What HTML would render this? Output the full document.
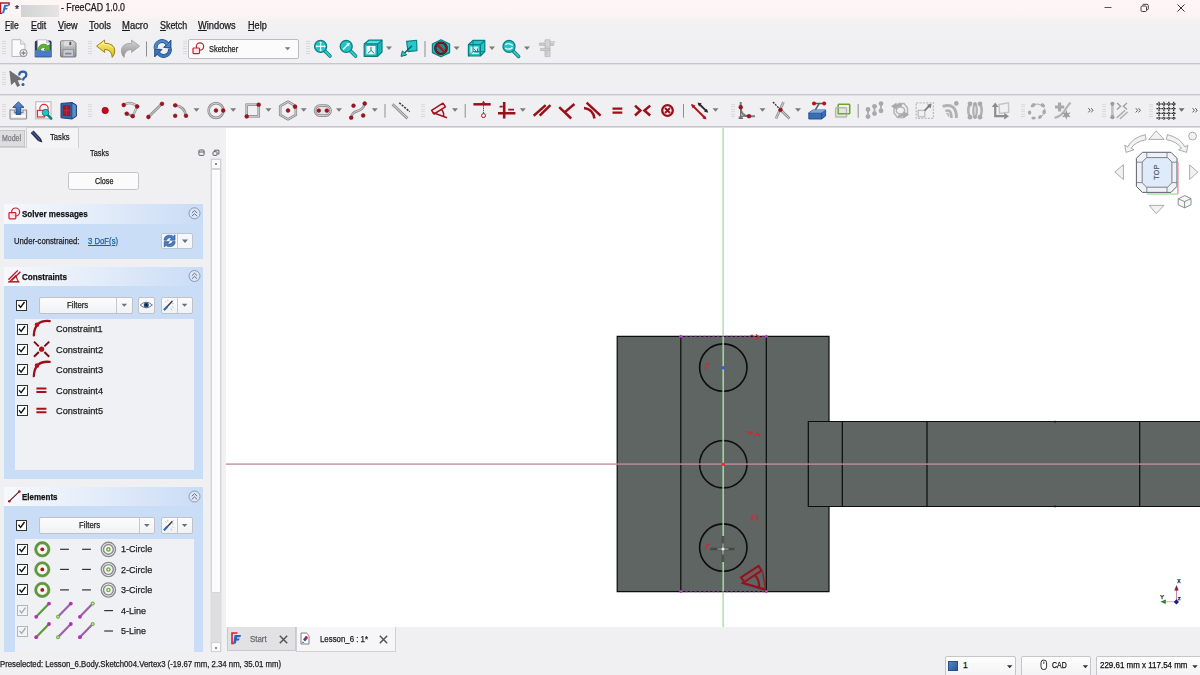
<!DOCTYPE html>
<html lang="en">
<head>
<meta charset="utf-8">
<title>FreeCAD 1.0.0</title>
<style>
*{box-sizing:border-box;margin:0;padding:0}
html,body{width:1200px;height:675px;overflow:hidden;background:#f0f0f2}
body{position:relative;font-family:"Liberation Sans",sans-serif;font-size:9px;color:#1a1a1a;-webkit-font-smoothing:antialiased}
.abs{position:absolute}
.t{position:absolute;white-space:nowrap;line-height:1;transform-origin:0 50%;-webkit-text-stroke:.25px currentColor}
.hl{position:absolute;height:1px;background:#c9c9cc}
.vl{position:absolute;width:1px;background:#9a9a9a}
svg{position:absolute;overflow:visible}
.grip{position:absolute;width:4px;height:15px;background-image:radial-gradient(circle,#bdbdc2 0.55px,transparent 0.9px);background-size:2px 2.5px;opacity:.6}
.arr{position:absolute;width:0;height:0;border-left:3px solid transparent;border-right:3px solid transparent;border-top:3.5px solid #777}
.chev{position:absolute;font-size:8px;color:#555;line-height:1}
u{text-decoration:underline;text-underline-offset:1px}
.btn{position:absolute;background:linear-gradient(#fdfdfd,#f1f1f3);border:1px solid #c2c2c6;border-radius:2px}
.cb{position:absolute;width:11px;height:11px;background:#fff;border:1px solid #333}
.cb.dis{border-color:#b5b5b8;background:#f4f4f6}
</style>
</head>
<body>
<!-- title bar -->
<div class="abs" style="left:0;top:0;width:1200px;height:36px;background:linear-gradient(#fdf5f6 0,#fcf4f5 15px,#f3f1f3 22px,#f0f0f2 36px)"></div>
<svg style="left:0;top:0" width="12" height="16" viewBox="0 0 12 16">
  <rect x=".6" y="2.900" width="8.400" height="10.300" fill="#fff"/>
  <path d="M9 5.400 V2.900 H.5 V13.200 H2.200" fill="none" stroke="#b81c28" stroke-width="1.500"/>
  <path d="M4.200 4.800 H8.900 L8.300 6.600 H6 L5.600 7.900 H7.700 L7.100 9.600 H5.100 L4.100 13.200 H2 Z" fill="#2f72cc"/>
</svg>
<div class="t" style="left:15px;top:5px;font-size:10px;color:#222">*</div>
<div class="abs" style="left:21px;top:5px;width:38px;height:12px;background:linear-gradient(90deg,#d2d2d2,#dcdcdc 50%,#e6e4e5);filter:blur(.6px)"></div>
<div class="t" id="ttl" style="left:61px;top:2.700px;font-size:10px;color:#1a1a1a;transform:scaleX(0.8790)">- FreeCAD 1.0.0</div>
<!-- window controls -->
<svg style="left:1100px;top:0" width="100" height="16" viewBox="0 0 100 16">
  <path d="M4.5 7.5 H11.5" stroke="#555" stroke-width="1" fill="none"/>
  <rect x="41" y="6" width="5.5" height="5.5" rx="1.2" fill="none" stroke="#444" stroke-width="1"/>
  <path d="M42.8 5.8 V5.2 Q42.8 4.3 43.8 4.3 H47 Q48.3 4.3 48.3 5.6 V8.8 Q48.3 9.7 47.3 9.7 H46.8" fill="none" stroke="#444" stroke-width="1"/>
  <path d="M77.5 4.5 L84.5 11.5 M84.5 4.5 L77.5 11.5" stroke="#333" stroke-width="1" fill="none"/>
</svg>
<!-- menu bar -->
<div class="t m" style="left:5px;top:20.600px;font-size:10px;transform:scaleX(0.8527)"><u>F</u>ile</div>
<div class="t m" style="left:30.5px;top:20.600px;font-size:10px;transform:scaleX(0.8849)"><u>E</u>dit</div>
<div class="t m" style="left:57.5px;top:20.600px;font-size:10px;transform:scaleX(0.9063)"><u>V</u>iew</div>
<div class="t m" style="left:88.75px;top:20.600px;font-size:10px;transform:scaleX(0.9418)"><u>T</u>ools</div>
<div class="t m" style="left:121.75px;top:20.600px;font-size:10px;transform:scaleX(0.9444)"><u>M</u>acro</div>
<div class="t m" style="left:159.5px;top:20.600px;font-size:10px;transform:scaleX(0.8912)"><u>S</u>ketch</div>
<div class="t m" style="left:198px;top:20.600px;font-size:10px;transform:scaleX(0.9299)"><u>W</u>indows</div>
<div class="t m" style="left:247.5px;top:20.600px;font-size:10px;transform:scaleX(0.9105)"><u>H</u>elp</div>
<!-- toolbar separators -->
<div class="hl" style="left:0;top:63px;width:1200px;background:#c6c6ca"></div>
<div class="hl" style="left:0;top:64px;width:1200px;background:#e2e2e5"></div>
<div class="hl" style="left:0;top:94px;width:1200px;background:#c6c6ca"></div>
<div class="hl" style="left:0;top:95px;width:1200px;background:#e2e2e5"></div>
<div class="hl" style="left:0;top:126px;width:1200px;background:#c6c6ca"></div>
<div class="hl" style="left:0;top:127px;width:1200px;background:#dcdcdf"></div>
<!-- toolbar 1 -->
<div class="grip" style="left:2px;top:40px"></div>
<div class="grip" style="left:88px;top:40px"></div>
<div class="grip" style="left:183px;top:40px"></div>
<div class="grip" style="left:306px;top:40px"></div>
<svg style="left:0;top:0" width="1200" height="130" viewBox="0 0 1200 130">
<defs>
  <linearGradient id="gTeal" x1="0" y1="0" x2="1" y2="1"><stop offset="0" stop-color="#34e0e2"/><stop offset="1" stop-color="#16b0b4"/></linearGradient>
  <linearGradient id="gBlue" x1="0" y1="0" x2="0" y2="1"><stop offset="0" stop-color="#5d8fd0"/><stop offset="1" stop-color="#2f62a8"/></linearGradient>
  <linearGradient id="gYel" x1="0" y1="0" x2="0" y2="1"><stop offset="0" stop-color="#fdf17a"/><stop offset="1" stop-color="#d9b81c"/></linearGradient>
  <linearGradient id="gGray" x1="0" y1="0" x2="0" y2="1"><stop offset="0" stop-color="#d4d4d6"/><stop offset="1" stop-color="#8d8d90"/></linearGradient>
</defs>
<!-- new document -->
<g transform="translate(11,39)">
  <path d="M1 .7 H9.5 L14 5.2 V17.5 H1 Z" fill="#fafafa" stroke="#b9b9bb" stroke-width="1"/>
  <path d="M9.5 .7 V5.2 H14" fill="#e9e9eb" stroke="#b9b9bb" stroke-width=".8"/>
  <circle cx="12.5" cy="14" r="3.6" fill="#f4f4f4" stroke="#8b8b8e" stroke-width="1"/>
  <path d="M12.5 11.8 V16.2 M10.3 14 H14.7" stroke="#8b8b8e" stroke-width="1.3"/>
</g>
<!-- open -->
<g transform="translate(34,39)">
  <path d="M.8 3.400 Q.8 1.400 2.800 1.400 H16 Q17.600 1.400 17.600 3 V17 H.8 Z" fill="#2a3d5e"/>
  <path d="M3.400 .8 H12.600 L15.800 3.800 V12 H3.400 Z" fill="#fbfbfb" stroke="#9a9a9d" stroke-width=".5"/>
  <path d="M12.600 .8 V3.800 H15.800" fill="#dcdcde" stroke="#9a9a9d" stroke-width=".5"/>
  <path d="M3.600 11.600 Q5 4.600 10.400 5.200 Q12.800 5.600 13.800 7 L15.400 5.800 L15.800 12.200 L10 10.600 L11.600 9.200 Q9.800 7.600 7.600 9 Q6.400 10 6.200 11.800 Z" fill="#5cb82e" stroke="#2f7a14" stroke-width=".7" stroke-linejoin="round"/>
  <path d="M.8 10.800 Q3.600 12 6.400 10.800 Q9 12.600 11.600 11.200 Q14.600 12.400 17.600 10.800 V17 Q17.600 18 16.600 18 H1.800 Q.8 18 .8 17 Z" fill="#4a7cc4"/>
  <path d="M.8 17 Q.8 18 1.800 18 H16.600 Q17.600 18 17.600 17" fill="none" stroke="#2f4f86" stroke-width=".8"/>
</g>
<!-- save -->
<g transform="translate(60,40)">
  <path d="M1.5 .8 H13.5 L16 3.3 V16 Q16 17 15 17 H1.5 Q.5 17 .5 16 V1.8 Q.5 .8 1.5 .8 Z" fill="url(#gGray)" stroke="#77777a" stroke-width=".9"/>
  <rect x="4" y="1.2" width="8.5" height="5" fill="#dcdcde"/>
  <rect x="9.3" y="1.8" width="2" height="3.4" fill="#5a5a5e"/>
  <rect x="3" y="9.5" width="10.5" height="7" fill="#c9c9cc" stroke="#7d7d80" stroke-width=".6"/>
  <rect x="5" y="12.8" width="6.5" height="1.6" fill="#6d86b4"/>
</g>
<!-- undo -->
<path d="M96.600 46.100 L104.600 40 V43.200 Q114.800 43.400 114.800 51 Q114.600 55 112.200 57.400 Q112 49.800 104.600 49.400 V52.400 Z" fill="url(#gYel)" stroke="#8f7a12" stroke-width=".9" stroke-linejoin="round"/>
<path d="M98.600 46 L103.800 42 V44.200 Q110 44.200 112.400 47.600" fill="none" stroke="#fff9a8" stroke-width=".8" opacity=".8"/>
<!-- redo -->
<path d="M139.600 46.100 L131.600 40 V43.200 Q121.400 43.400 121.400 51 Q121.600 55 124 57.400 Q124.200 49.800 131.600 49.400 V52.400 Z" fill="url(#gGray)" stroke="#a4a4a7" stroke-width=".9" stroke-linejoin="round"/>
<path d="M146.5 41.5 V56.5" stroke="#8e8e92" stroke-width="1"/>
<!-- refresh -->
<g fill="none" stroke-linecap="butt">
  <path d="M155.700 48.400 A6.400 6.400 0 0 1 167.400 44" stroke="#1f4a86" stroke-width="4"/>
  <path d="M169.900 48.600 A6.400 6.400 0 0 1 158.200 53" stroke="#1f4a86" stroke-width="4"/>
  <path d="M171 40 V48.200 L163.600 47.400 Z M154.600 57 V48.800 L162 49.600 Z" fill="#1f4a86" stroke="#1f4a86" stroke-width=".8" stroke-linejoin="round"/>
  <path d="M155.700 48.400 A6.400 6.400 0 0 1 167.400 44" stroke="#4f86c8" stroke-width="2.600"/>
  <path d="M169.900 48.600 A6.400 6.400 0 0 1 158.200 53" stroke="#3f74b8" stroke-width="2.600"/>
  <path d="M170.400 41.400 V47.400 L165 46.800 Z" fill="#4f86c8"/><path d="M155.200 55.600 V49.600 L160.600 50.200 Z" fill="#3f74b8"/>
</g>
<!-- workbench combo -->
<rect x="188.5" y="39.5" width="110" height="19" rx="1.5" fill="#fbfbfc" stroke="#bcbcc0"/>
<circle cx="200" cy="46.5" r="3.7" fill="none" stroke="#cc1f2b" stroke-width="1.2"/>
<rect x="193" y="48" width="6.5" height="5.6" rx=".8" fill="#fbe9ea" stroke="#cc1f2b" stroke-width="1.2"/>
<path d="M284.8 47.3 H290.4 L287.6 50.2 Z" fill="#7b7b7e"/>
<!-- zoom fit -->
<g transform="translate(313,39)">
  <path d="M11.2 11.2 L17 17" stroke="#0b7e82" stroke-width="3.6" stroke-linecap="round"/>
  <path d="M11.2 11.2 L17 17" stroke="#2bd0d3" stroke-width="1.8" stroke-linecap="round"/>
  <circle cx="7.6" cy="7.4" r="6" fill="#23c3c6" stroke="#0b7e82" stroke-width="1.3"/>
  <path d="M7.6 3 V11.8 M3.2 7.4 H12" stroke="#e8ffff" stroke-width="1.2"/>
  <path d="M7.6 2.2 L9 4 H6.2 Z M7.6 12.6 L9 10.8 H6.2 Z M2.4 7.4 L4.2 6 V8.8 Z M12.8 7.4 L11 6 V8.8 Z" fill="#e8ffff"/>
</g>
<!-- zoom selection -->
<g transform="translate(338,39)">
  <path d="M11.8 11.2 L17.6 17" stroke="#0b7e82" stroke-width="3.6" stroke-linecap="round"/>
  <path d="M11.8 11.2 L17.6 17" stroke="#2bd0d3" stroke-width="1.8" stroke-linecap="round"/>
  <circle cx="8.2" cy="7.4" r="6" fill="#23c3c6" stroke="#0b7e82" stroke-width="1.3"/>
  <path d="M5 10.6 L10 5.6" stroke="#e8ffff" stroke-width="1.4"/>
  <path d="M11.8 3.8 L11 7.4 L8.2 4.6 Z" fill="#e8ffff"/>
</g>
<!-- iso cube -->
<g transform="translate(363,39)">
  <path d="M1.2 5 L6 1 H19 V13 L14.5 17.4 H1.2 Z" fill="#1bb7ba" stroke="#0b7e82" stroke-width="1.2" stroke-linejoin="round"/>
  <path d="M1.2 5 H14.5 V17.4 M14.5 5 L19 1" fill="none" stroke="#0b7e82" stroke-width="1.2"/>
  <rect x="3.4" y="7" width="9" height="8.4" fill="#e9fbfb"/>
  <path d="M8 11.4 V8 M8 11.4 L4.6 14.6 M8 11.4 L11.4 14.6" stroke="#0b7e82" stroke-width="1"/>
  <path d="M6 2.2 H17.4 L14.6 4 H3.6 Z" fill="#5de8ea"/>
</g>
<path d="M386 46.6 H392 L389 50 Z" fill="#7b7b7e"/>
<!-- link view -->
<g transform="translate(400,39)">
  <path d="M6.6 2.4 L16.6 1.2 L17 11.6 L8 12.6 Z" fill="#27c9cc" stroke="#0b7e82" stroke-width="1.1" stroke-linejoin="round"/>
  <path d="M12 6.8 L4 14.4" stroke="#0b5e62" stroke-width="1.4"/>
  <path d="M1 17.4 L2.4 11.8 L6.6 16 Z" fill="#27c9cc" stroke="#0b5e62" stroke-width=".9" stroke-linejoin="round"/>
</g>
<path d="M425 41 V57" stroke="#8e8e92" stroke-width="1"/>
<!-- no-hex -->
<g transform="translate(431,39)">
  <path d="M10 .8 L18.6 5 V13.6 L10 17.8 L1.4 13.6 V5 Z" fill="#1fbec1" stroke="#0b7e82" stroke-width="1.2" stroke-linejoin="round"/>
  <circle cx="10" cy="9.3" r="5.7" fill="#1a8d92" stroke="#3a0d10" stroke-width="2.2"/>
  <path d="M6 5.3 L14 13.3" stroke="#a31c22" stroke-width="2.4"/>
  <circle cx="10" cy="9.3" r="5.7" fill="none" stroke="#8f1a20" stroke-width="1.1"/>
</g>
<path d="M453.600 46.600 H459.600 L456.600 50 Z" fill="#7b7b7e"/>
<!-- wire cube -->
<g transform="translate(467,39)">
  <path d="M1.4 5.6 L6 1.4 H17.8 V12.6 L13.4 17 H1.4 Z" fill="#24c4c7" stroke="#0b7e82" stroke-width="1.2" stroke-linejoin="round"/>
  <path d="M1.4 5.6 H13.4 V17 M13.4 5.6 L17.8 1.4" fill="none" stroke="#0b7e82" stroke-width="1.2"/>
  <path d="M3.4 7.6 H11.4 V15 H3.4 Z" fill="#c8f4f5"/>
  <path d="M6 1.4 V12.6 H17.8 M6 12.6 L1.4 17" fill="none" stroke="#0b7e82" stroke-width=".9"/>
  <path d="M6.5 9.5 L10.5 13.5 M7 13 H10.5 V9.5" stroke="#0b7e82" stroke-width=".9" fill="none"/>
</g>
<path d="M489 46.600 H495 L492 50 Z" fill="#7b7b7e"/>
<!-- zoom menu -->
<g transform="translate(501,39)">
  <path d="M11.6 11.4 L17.6 17.4" stroke="#0b7e82" stroke-width="3.6" stroke-linecap="round"/>
  <path d="M11.6 11.4 L17.6 17.4" stroke="#2bd0d3" stroke-width="1.8" stroke-linecap="round"/>
  <circle cx="8" cy="7.4" r="6" fill="#23c3c6" stroke="#0b7e82" stroke-width="1.3"/>
  <path d="M4.4 5.8 Q7.6 3.2 11.8 6.6 M4.2 9.2 Q8 11.2 11.6 8.6" stroke="#e0fbfb" stroke-width="1.3" fill="none"/>
</g>
<path d="M524 46.600 H530 L527 50 Z" fill="#7b7b7e"/>
<!-- measure (disabled) -->
<g transform="translate(538,39)" opacity=".85">
  <path d="M1.4 4 H15.6 V6.4 H1.4 Z" fill="#c6c6c8" stroke="#a9a9ac" stroke-width=".7"/>
  <path d="M7 .8 H12 V17.6 H7 Z" fill="#cfcfd1" stroke="#a9a9ac" stroke-width=".7"/>
  <path d="M2.6 9.4 H12 V11.6 H2.6 Z" fill="#c6c6c8" stroke="#a9a9ac" stroke-width=".7"/>
  <path d="M12 2.6 H16.6 V4 M7 13 H9.4 M7 15 H9.4 M7 8 H9.4" stroke="#a9a9ac" stroke-width=".7" fill="none"/>
</g>
</svg>
<div class="t" id="wbt" style="left:208.500px;top:44px;font-size:9.5px;color:#222;transform:scaleX(0.7787)">Sketcher</div>
<!-- toolbar 2 + 3 -->
<div class="grip" style="left:2px;top:71px"></div>
<div class="grip" style="left:2px;top:103px"></div>
<div class="grip" style="left:88px;top:103px"></div>
<div class="grip" style="left:421px;top:103px"></div>
<div class="grip" style="left:731px;top:103px"></div>
<div class="grip" style="left:1021px;top:103px"></div>
<div class="grip" style="left:1102px;top:103px"></div>
<div class="grip" style="left:1149px;top:103px"></div>
<svg style="left:0;top:0" width="1200" height="130" viewBox="0 0 1200 130">
<defs>
  <g id="rd"><circle r="1.9" fill="#a3121d"/><circle r="1.9" fill="none" stroke="#7a0c14" stroke-width=".5"/></g>
  <path id="da" d="M-3 -1.7 H3 L0 1.7 Z" fill="#7b7b7e"/>
</defs>
<!-- what's this -->
<g transform="translate(9,70)">
  <path d="M.8 1 L12.8 9.2 L8.2 10.2 L10.6 15.4 L8.4 16.6 L5.8 11.4 L2.4 14.6 Z" fill="#6f6f72" stroke="#58585b" stroke-width=".6" stroke-linejoin="round"/>
  <path d="M10.2 5.4 Q10.2 1.6 13.8 1.6 Q17.4 1.6 17.4 4.8 Q17.4 6.8 15.4 7.8 Q14 8.6 14 10.6" fill="none" stroke="#2f5f9e" stroke-width="2.2"/>
  <circle cx="14" cy="14.4" r="1.5" fill="#2f5f9e"/>
</g>
<!-- leave sketch -->
<g transform="translate(9,101)">
  <path d="M1 9 H5.4 V11.6 H14 V9 H17.6 V17 Q17.6 18 16.6 18 H2 Q1 18 1 17 Z" fill="#e9e9eb" stroke="#8d8d90" stroke-width="1.1"/>
  <path d="M3 13.6 H15.8 V16 H3 Z" fill="#fbfbfb"/>
  <path d="M9.4 .8 L15 6.4 H11.8 V13.4 H7 V6.4 H3.8 Z" fill="url(#gBlue)" stroke="#1f4a86" stroke-width=".9" stroke-linejoin="round"/>
</g>
<!-- view sketch -->
<g transform="translate(35,101)">
  <rect x=".8" y=".8" width="15.2" height="17" fill="#fbfbfb" stroke="#b4b4b7" stroke-width="1"/>
  <circle cx="9" cy="7.6" r="4.2" fill="none" stroke="#d8303a" stroke-width="1.2"/>
  <rect x="2.4" y="9.4" width="7" height="6.6" fill="#fde8e9" stroke="#d8303a" stroke-width="1.2"/>
  <path d="M12.6 13.8 L16.2 17.6" stroke="#0b7e82" stroke-width="2.6" stroke-linecap="round"/>
  <circle cx="10.6" cy="11.6" r="3.3" fill="#23c3c6" stroke="#0b7e82" stroke-width="1"/>
</g>
<!-- view section -->
<g transform="translate(60,102)">
  <path d="M1 1.4 L12 .6 L16.4 3.2 V14.2 L12 17 L1 15.8 Z" fill="#3465a4" stroke="#1f3f74" stroke-width="1" stroke-linejoin="round"/>
  <path d="M12 .6 V17 M12 .6 L16.4 3.2" stroke="#1f3f74" stroke-width=".8" fill="none"/>
  <path d="M12.4 1.6 L15.8 3.6 V13.8 L12.4 16 Z" fill="#5d8fd0"/>
  <rect x="3.2" y="3.8" width="6.8" height="9.6" fill="#9b1d2b" stroke="#5b2a6e" stroke-width=".9"/>
  <path d="M6.6 4 V13.2 M3.4 8.6 H9.8" stroke="#d8303a" stroke-width=".7"/>
</g>
<!-- point -->
<circle cx="105.200" cy="110.500" r="3.200" fill="#c00d18"/><circle cx="105.200" cy="110.500" r="3.200" fill="none" stroke="#8c0a12" stroke-width=".7"/>
<!-- polyline -->
<path d="M123.700 105 Q130.500 100.500 137.200 106.500" fill="none" stroke="#9a9a9d" stroke-width="2.400"/>
<path d="M123.700 105 Q130.500 100.500 137.200 106.500" fill="none" stroke="#d9d9db" stroke-width="1"/>
<path d="M137.200 106.500 L132.700 116.200 L126.700 113.700" fill="none" stroke="#9a9a9d" stroke-width="2.400" stroke-linejoin="round"/>
<path d="M137.200 106.500 L132.700 116.200" fill="none" stroke="#d9d9db" stroke-width="1"/>
<use href="#rd" x="123.700" y="105"/><use href="#rd" x="137.200" y="106.500"/><use href="#rd" x="132.700" y="116.200"/><use href="#rd" x="126.700" y="113.700"/>
<!-- line -->
<path d="M148.400 117 L162 103.800" stroke="#8d8d90" stroke-width="2.600"/><path d="M148.400 117 L162 103.800" stroke="#d9d9db" stroke-width="1"/>
<use href="#rd" x="148.400" y="117"/><use href="#rd" x="162" y="103.800"/>
<!-- arc -->
<path d="M175.200 105.300 Q184.500 106.500 186 115.800" fill="none" stroke="#8d8d90" stroke-width="2.600"/>
<path d="M175.200 105.300 Q184.500 106.500 186 115.800" fill="none" stroke="#cfcfd1" stroke-width="1"/>
<use href="#rd" x="175.200" y="105.300"/><use href="#rd" x="175.200" y="115.800"/><use href="#rd" x="186" y="115.800"/>
<use href="#da" x="196.500" y="110"/>
<!-- circle -->
<circle cx="216" cy="110.500" r="7.400" fill="none" stroke="#8d8d90" stroke-width="2.600"/><circle cx="216" cy="110.500" r="7.400" fill="none" stroke="#d4d4d6" stroke-width="1"/>
<use href="#rd" x="216" y="110.500"/><use href="#rd" x="223.200" y="110.500"/>
<use href="#da" x="233.200" y="110"/>
<!-- rectangle -->
<rect x="246.700" y="104.700" width="12" height="11.600" fill="none" stroke="#8d8d90" stroke-width="2.600"/><rect x="246.700" y="104.700" width="12" height="11.600" fill="none" stroke="#d4d4d6" stroke-width="1"/>
<use href="#rd" x="258.700" y="104.700"/><use href="#rd" x="246.700" y="116.400"/>
<use href="#da" x="268.500" y="110"/>
<!-- hexagon -->
<path d="M288 101.700 L295.800 106.100 V114.900 L288 119.300 L280.200 114.900 V106.100 Z" fill="none" stroke="#8d8d90" stroke-width="2.600" stroke-linejoin="round"/>
<path d="M288 101.700 L295.800 106.100 V114.900 L288 119.300 L280.200 114.900 V106.100 Z" fill="none" stroke="#d4d4d6" stroke-width="1" stroke-linejoin="round"/>
<use href="#rd" x="288" y="110.500"/><use href="#rd" x="295" y="106.700"/>
<use href="#da" x="303.700" y="110"/>
<!-- slot -->
<rect x="315" y="105.600" width="15.600" height="10" rx="5" fill="#e4e4e6" stroke="#8d8d90" stroke-width="2.600"/><rect x="315" y="105.600" width="15.600" height="10" rx="5" fill="none" stroke="#d4d4d6" stroke-width="1"/>
<use href="#rd" x="318.800" y="110.600"/><use href="#rd" x="326.800" y="110.600"/>
<use href="#da" x="339" y="110"/>
<!-- bspline -->
<path d="M351.200 117.700 C352 108 363 114 364.700 103.500" fill="none" stroke="#8d8d90" stroke-width="2.600"/>
<path d="M351.200 117.700 C352 108 363 114 364.700 103.500" fill="none" stroke="#d4d4d6" stroke-width="1"/>
<use href="#rd" x="351.200" y="117.700"/><use href="#rd" x="353.500" y="105.700"/><use href="#rd" x="364.700" y="103.500"/><use href="#rd" x="363.200" y="115.500"/>
<use href="#da" x="374.800" y="110"/>
<path d="M385 104 V117.700" stroke="#8e8e92" stroke-width="1"/>
<!-- construction -->
<path d="M392.500 104.200 L407.500 118.500" stroke="#8d8d90" stroke-width="2.800"/><path d="M392.500 104.200 L407.500 118.500" stroke="#e4e4e6" stroke-width="1"/>
<path d="M399.200 102.700 L409.700 111.700" stroke="#3b3b3e" stroke-width="1.500" stroke-dasharray="2.200 1.100"/>
<!-- constraint dimension -->
<g transform="translate(430,101)">
  <path d="M1.600 9.400 L13 2.200 L15.400 5.800 L4 13 Z" fill="#f6eaea" stroke="#a3121d" stroke-width="1.500" stroke-linejoin="round"/>
  <path d="M2.600 11.600 L17 16.800" stroke="#a3121d" stroke-width="1.600"/>
  <path d="M11.400 8.600 Q14.400 11.800 13.400 15.400" stroke="#a3121d" stroke-width="1.500" fill="none"/>
</g>
<use href="#da" x="455" y="110"/>
<path d="M465.200 104 V117.700" stroke="#8e8e92" stroke-width="1"/>
<!-- coincident -->
<path d="M473.400 104.300 H490.700" stroke="#9a0f1a" stroke-width="2.500"/>
<path d="M482 103 L483.500 100.800 L485 103 Z" fill="#a3121d"/>
<path d="M483.500 105.400 V113.400" stroke="#a3121d" stroke-width=".9" stroke-dasharray="1.400 .8"/>
<circle cx="483.500" cy="115.600" r="2" fill="#fff" stroke="#a3121d" stroke-width="1"/>
<!-- horiz/vert -->
<path d="M504.200 102 V118.600 M498 113.300 H515.400" stroke="#9a0f1a" stroke-width="2.600"/>
<path d="M499.600 106.700 H502.700 M508.200 109.600 H514" stroke="#a3121d" stroke-width="1.700"/>
<use href="#da" x="522.800" y="110"/>
<!-- parallel -->
<path d="M533.700 115.700 L545.700 105.100 M539.700 115.700 L550.400 105.100" stroke="#9a0f1a" stroke-width="2.500"/>
<!-- perpendicular -->
<path d="M559.200 107.200 L571.200 118.500 M574.400 104 L565.200 111.900" stroke="#9a0f1a" stroke-width="2.500"/>
<!-- tangent -->
<path d="M584 108 Q593 109 594.500 118.500" fill="none" stroke="#9a0f1a" stroke-width="2.500"/>
<path d="M586.600 102.600 L600.600 115.600" stroke="#9a0f1a" stroke-width="2.500"/>
<!-- equal -->
<path d="M612.500 108.700 H622.300 M612.500 112.600 H622.300" stroke="#9a0f1a" stroke-width="2.300"/>
<!-- symmetric -->
<path d="M635 105.600 L640.400 110.500 L635 115.500 M650.200 105.600 L644.400 110.500 L650.200 115.500" fill="none" stroke="#9a0f1a" stroke-width="2.500"/>
<!-- block -->
<circle cx="667.500" cy="110.500" r="5.300" fill="none" stroke="#9a0f1a" stroke-width="2.300"/>
<path d="M665 108 L670 113 M670 108 L665 113" stroke="#9a0f1a" stroke-width="1.900"/>
<path d="M683.500 104 V117.700" stroke="#8e8e92" stroke-width="1"/>
<!-- toggle driving -->
<path d="M692 105 L705.500 118.500" stroke="#b3121d" stroke-width="2"/>
<path d="M691 104 L695.400 105.400 L692.600 108.200 Z M706.600 119.500 L702.200 118.200 L705 115.400 Z" fill="#b3121d"/>
<path d="M698.700 103.500 L707 111.700" stroke="#2a2a2d" stroke-width="1.800"/>
<path d="M697.600 102.400 L701.800 103.600 L699 106.400 Z M708.200 112.800 L704 111.600 L706.800 108.800 Z" fill="#2a2a2d"/>
<use href="#da" x="715.500" y="110"/>
<!-- fillet -->
<path d="M740.700 102 V108 Q741 116 749 116.200 H755" fill="none" stroke="#7d7d80" stroke-width="2"/>
<path d="M740.700 108 V117.200 M738.600 118.300 H743 M740.700 116.200 H749" stroke="#6d6d70" stroke-width="1.300" fill="none"/>
<path d="M740.700 119.300 L738.300 116.600 H743.100 Z" fill="#6d6d70"/>
<use href="#rd" x="740.700" y="107.200"/><use href="#rd" x="749" y="116.200"/>
<use href="#da" x="762.500" y="110"/>
<!-- trim -->
<path d="M783.500 102 L776 118.500 M780.500 109.800 L789.500 118.500" stroke="#8d8d90" stroke-width="2.600"/>
<path d="M783.500 102 L776 118.500 M780.500 109.800 L789.500 118.500" stroke="#d4d4d6" stroke-width="1"/>
<path d="M773 102 L779 108.300" stroke="#333" stroke-width="1.300" stroke-dasharray="2 1"/>
<use href="#rd" x="780.500" y="109.800"/>
<use href="#da" x="798" y="110"/>
<!-- external geometry -->
<g transform="translate(808,101)">
  <path d="M.8 11.800 L5 9 H17.600 V15 L13.600 18 H.8 Z" fill="#3a6fb4" stroke="#1f4a86" stroke-width=".9" stroke-linejoin="round"/>
  <path d="M.8 11.800 H13.600 V18 M13.600 11.800 L17.600 9" fill="none" stroke="#1f4a86" stroke-width=".8"/>
  <path d="M5 9 H17.600 L13.600 11.800 H.8 Z" fill="#7aa6dc"/>
  <path d="M7.400 8.600 L11 3 M6 2.500 H16.400" stroke="#5a5a5e" stroke-width="1.500"/>
  <circle cx="6" cy="2.500" r="2" fill="#c00d18"/><circle cx="16.200" cy="2.500" r="2" fill="#c00d18"/>
</g>
<!-- carbon copy -->
<rect x="838.200" y="104.200" width="11.500" height="9.600" rx=".8" fill="#eef4e6" stroke="#76a32a" stroke-width="1.600"/>
<rect x="835.600" y="107.800" width="11" height="9.200" rx=".8" fill="#e4e4e6" stroke="#b7b7ba" stroke-width="1.400"/>
<path d="M838.200 108 V113.800 H846.600" fill="none" stroke="#76a32a" stroke-width="1.400"/>
<path d="M858.200 104 V117.700" stroke="#8e8e92" stroke-width="1"/>
</svg>
<!-- toolbar 3 right side (disabled tools) -->
<svg style="left:0;top:0" width="1200" height="130" viewBox="0 0 1200 130">
<g fill="#a9a9ac" stroke="none">
  <!-- clone dumbbells -->
  <g stroke="#b0b0b3" stroke-width="1.900"><path d="M868 109.500 V116.500 M874.500 106.500 V113.500 M881 103.800 V110.600"/></g>
  <circle cx="868" cy="109.500" r="2.400"/><circle cx="868" cy="116.600" r="2.400"/><circle cx="874.500" cy="106.300" r="2.400"/><circle cx="874.500" cy="113.600" r="2.400"/><circle cx="881" cy="103.600" r="2.400"/><circle cx="881" cy="110.800" r="2.400"/>
  <!-- rotate -->
  <g fill="none" stroke="#b4b4b7" stroke-width="1.500">
    <path d="M894 107.500 L899 103.500 H904 L907.500 108 V113 L903 117.500 H897.500 L894 113 Z"/>
    <ellipse cx="900.500" cy="110.500" rx="4.200" ry="3.400"/>
  </g>
  <path d="M891 106.200 L896.600 102.600 V105 Q900 103.400 902.400 104 L901.600 106.400 Q899.200 106.200 896.800 107.600 V109.800 Z"/>
  <path d="M909.200 114.600 L903.600 118.400 V116 Q900.200 117.400 897.800 116.800 L898.600 114.400 Q901 114.800 903.400 113.400 V111.200 Z"/>
  <!-- scale -->
  <g fill="none" stroke="#bdbdc0" stroke-width="1.300">
    <rect x="916.200" y="102.800" width="17.200" height="15.600" stroke-dasharray="2 1.300"/>
    <rect x="918.200" y="110.400" width="6.600" height="6.400"/>
  </g>
  <path d="M924.600 110.600 L929 106.200" stroke="#7c7c7f" stroke-width="1.800"/>
  <path d="M931.600 103.800 L930.600 108.400 L927 104.800 Z" fill="#7c7c7f"/>
  <!-- offset -->
  <g fill="none" stroke="#b1b1b4">
    <path d="M942.600 106.400 Q956.800 102.500 956.400 118" stroke-width="3"/>
    <path d="M945.400 111 Q951.600 108.500 951.400 118" stroke-width="2.600"/>
    <path d="M946.500 113.600 Q948.800 113.200 948.600 116.500" stroke-width="1.600"/>
  </g>
  <circle cx="956.300" cy="103.400" r="2.300"/>
  <!-- symmetry -->
  <g fill="none" stroke="#b1b1b4" stroke-width="2.700">
    <path d="M970 104 Q966.500 110.500 970 117 M980 104 Q983.500 110.500 980 117"/>
    <path d="M974.300 104 Q972.300 110.500 974.300 117 M975.800 104 Q977.800 110.500 975.800 117" stroke-width="2.200"/>
  </g>
  <circle cx="970" cy="103.800" r="2.400"/><circle cx="970" cy="117.200" r="2.400"/><circle cx="980" cy="103.800" r="2.400"/><circle cx="980" cy="117.200" r="2.400"/><circle cx="975" cy="103.800" r="1.800"/><circle cx="975" cy="117.200" r="1.800"/>
  <!-- move -->
  <g fill="none" stroke="#c4c4c7" stroke-width="1.400"><path d="M999 104.500 L1008.400 102.800 L1008.800 112.200 L999.600 113.400 Z"/></g>
  <path d="M995.200 106.500 V116.200 H1004.600" fill="none" stroke="#8d8d90" stroke-width="2.200"/>
  <path d="M995.200 102.400 L998.600 107 H991.800 Z M1009 116.200 L1004.200 119.600 V112.800 Z" fill="#8d8d90"/>
  <!-- circular pattern -->
  <g fill="none" stroke="#b8b8bb" stroke-width="1.200"><path d="M1030.800 107 Q1035.600 102 1041.400 105.400 M1044.600 108.400 Q1045 113.600 1040.800 117"/></g>
  <ellipse cx="1033.200" cy="105.200" rx="2.400" ry="1.800" transform="rotate(-35 1033.200 105.200)"/>
  <ellipse cx="1042.800" cy="105.400" rx="2.400" ry="1.800" transform="rotate(40 1042.800 105.400)"/>
  <ellipse cx="1044.200" cy="112" rx="1.800" ry="2.300"/>
  <ellipse cx="1040" cy="117" rx="2.200" ry="1.700" transform="rotate(-40 1040 117)"/>
  <ellipse cx="1033.600" cy="118" rx="2.200" ry="1.600"/>
  <ellipse cx="1029.600" cy="112.600" rx="1.700" ry="2.200"/>
  <!-- plus/curve/star -->
  <path d="M1058 102.400 H1061.200 V105.400 H1064.200 V108.600 H1061.200 V111.600 H1058 V108.600 H1055 V105.400 H1058 Z"/>
  <path d="M1054.600 117.800 Q1062 116.400 1066 108.600 Q1068.400 104.400 1070.600 102.600" fill="none" stroke="#b4b4b7" stroke-width="2.200"/>
  <path d="M1066.400 110 L1067.400 113 L1070.600 112.400 L1068.600 114.800 L1070.600 117.200 L1067.400 116.800 L1066.400 119.800 L1065.200 116.800 L1062 117.200 L1064.200 114.800 L1062 112.400 L1065.200 113 Z" fill="#9d9da0"/>
  <!-- bspline tools icon -->
  <path d="M1112.400 104 V117" stroke="#c0c0c3" stroke-width="2.600"/>
  <circle cx="1112.400" cy="103.800" r="2.100" fill="#9d9da0"/><circle cx="1112.400" cy="117.200" r="2.100" fill="#9d9da0"/>
  <path d="M1117 103 L1120.600 106.200 L1117 109.400 M1127 103 L1123.400 106.200 L1127 109.400" fill="none" stroke="#9d9da0" stroke-width="1.300"/>
  <path d="M1116.600 118 L1125 110.400 M1119.800 119 L1127.600 112" stroke="#aeaeb1" stroke-width="1.500"/>
</g>
<!-- chevrons -->
<g fill="none" stroke="#4a4a4d" stroke-width=".9">
  <path d="M1088.400 108.200 L1090.200 110.300 L1088.400 112.400 M1091.200 108.200 L1093 110.300 L1091.200 112.400"/>
  <path d="M1135.800 108.200 L1137.600 110.300 L1135.800 112.400 M1138.600 108.200 L1140.400 110.300 L1138.600 112.400"/>
  <path d="M1192.600 108.200 L1194.400 110.300 L1192.600 112.400 M1195.400 108.200 L1197.200 110.300 L1195.400 112.400"/>
</g>
<!-- grid -->
<g stroke="#2f2f32" stroke-width="1.300" stroke-dasharray="1.700 .8">
  <path d="M1159 101.800 V120 M1163.900 101.800 V120 M1168.800 101.800 V120 M1173.700 101.800 V120"/>
  <path d="M1156.400 104 H1176.200 M1156.400 108.700 H1176.200 M1156.400 113.400 H1176.200 M1156.400 118.100 H1176.200"/>
</g>
<path d="M1178.600 108.300 H1184.600 L1181.600 111.700 Z" fill="#6b6b6e"/>
</svg>
<!-- left dock panel -->
<div class="abs" style="left:0;top:128px;width:224px;height:524px;background:#f0f0f2"></div>
<div class="abs" style="left:222px;top:128px;width:4px;height:524px;background:#f1f1f3"></div>
<!-- tabs -->
<div class="abs" style="left:0;top:147px;width:26px;height:1px;background:#d3d3d6"></div>
<div class="abs" style="left:0;top:130px;width:25px;height:17px;background:#dddde0;border:1px solid #c6c6c9;border-left:none"></div>
<div class="t" style="left:1.600px;top:134px;font-size:9px;color:#7a7a7d;transform:scaleX(0.7750)">Model</div>
<div class="abs" style="left:26px;top:127px;width:53px;height:21px;background:#f4f4f6;border:1px solid #cfcfd2;border-bottom:none"></div>
<svg style="left:30px;top:130px" width="13" height="13" viewBox="0 0 13 13">
  <path d="M.6 3 L3.600 .4 L11 8.400 L8 11 Z" fill="#27335a"/>
  <path d="M8 11 L11 8.400 L12.400 12.600 Z" fill="#1c2440"/>
  <path d="M2.400 1.800 L9.600 9.600" stroke="#6d7ca8" stroke-width=".8"/>
</svg>
<div class="t" style="left:50.400px;top:133px;font-size:9px;color:#222;transform:scaleX(0.8516)">Tasks</div>
<div class="t" style="left:90px;top:148.700px;font-size:9px;color:#222;transform:scaleX(0.8212)">Tasks</div>
<svg style="left:198px;top:149px" width="24" height="8" viewBox="0 0 24 8">
  <rect x=".9" y="1" width="5.200" height="5.400" rx=".8" fill="none" stroke="#55555a" stroke-width=".9"/><path d="M.9 3 H6.100" stroke="#55555a" stroke-width=".9"/>
  <rect x="15" y="2.700" width="4" height="3.700" rx=".6" fill="none" stroke="#55555a" stroke-width=".9"/><path d="M16.600 2.500 V1.200 H20.900 V5 H19.400" fill="none" stroke="#55555a" stroke-width=".9"/>
</svg>
<!-- close -->
<div class="btn" style="left:68px;top:172px;width:71px;height:18px;background:#fbfbfc;border-color:#c4c4c8;border-radius:2.500px"></div>
<div class="t" style="left:94.500px;top:176.700px;font-size:9px;color:#222;transform:scaleX(0.8038)">Close</div>
<!-- scrollbar -->
<div class="abs" style="left:210px;top:158px;width:12px;height:494px;background:#e4e4e7"></div>
<div class="abs" style="left:211px;top:159px;width:10px;height:10px;background:#fafafb;border:1px solid #d2d2d5"></div>
<div class="abs" style="left:215px;top:163px;width:2px;height:1.500px;background:#8a8a8d"></div>
<div class="abs" style="left:211px;top:169px;width:10px;height:424px;background:#fbfbfc;border:1px solid #d6d6d9"></div>
<div class="abs" style="left:211px;top:593px;width:10px;height:49px;background:#dedee1"></div>
<div class="abs" style="left:211px;top:642px;width:10px;height:10px;background:#fafafb;border:1px solid #d2d2d5"></div>
<div class="abs" style="left:215px;top:647px;width:2px;height:1.500px;background:#8a8a8d"></div>

<!-- Solver messages -->
<div class="abs" style="left:4px;top:204px;width:199px;height:20px;background:linear-gradient(90deg,#f6f8fc,#e4edfa 45%,#c9dcf6)"></div>
<div class="abs" style="left:4px;top:223.500px;width:199px;height:35px;background:#c9ddf6"></div>
<svg style="left:8px;top:207px" width="13" height="14" viewBox="0 0 13 14">
  <circle cx="7.600" cy="5" r="4" fill="none" stroke="#c8202c" stroke-width="1.200"/>
  <rect x="1" y="5.600" width="6.800" height="6.200" rx=".8" fill="#fbe9ea" fill-opacity=".8" stroke="#c8202c" stroke-width="1.200"/>
</svg>
<div class="t" style="left:22px;top:209px;font-size:9.500px;font-weight:bold;color:#111;transform:scaleX(0.8475)">Solver messages</div>
<div class="t" style="left:14px;top:236.600px;font-size:9px;color:#1c1c1f;transform:scaleX(0.8557)">Under-constrained:</div>
<div class="t" style="left:87.800px;top:236.600px;font-size:9px;color:#1d5fa8;text-decoration:underline;text-underline-offset:1px;transform:scaleX(0.8596)">3 DoF(s)</div>
<div class="btn" style="left:160.500px;top:233px;width:32px;height:15.500px;background:#f6f7fa;border-color:#bfc5cf"></div>
<div class="abs" style="left:177px;top:234px;width:1px;height:13.500px;background:#c5cad3"></div>
<svg style="left:163px;top:234px" width="30" height="14" viewBox="0 0 30 14">
  <path d="M1 6.200 Q1.200 1.200 6.600 1.200 Q9 1.200 10.200 2.400 L12 .8 V6.200 H6.800 L8.400 4.400 Q7.600 3.800 6.500 3.800 Q3.800 4 3.700 6.200 Z" fill="#4a7dc0" stroke="#274f8a" stroke-width=".6" stroke-linejoin="round"/>
  <path d="M12.200 7.600 Q12 12.600 6.600 12.600 Q4.200 12.600 3 11.400 L1.200 13 V7.600 H6.400 L4.800 9.400 Q5.600 10 6.700 10 Q9.400 9.800 9.500 7.600 Z" fill="#4a7dc0" stroke="#274f8a" stroke-width=".6" stroke-linejoin="round"/>
  <path d="M19 5.600 H25 L22 9 Z" fill="#6f6f73"/>
</svg>

<!-- Constraints -->
<div class="abs" style="left:4px;top:267px;width:199px;height:20px;background:linear-gradient(90deg,#f6f8fc,#e4edfa 45%,#c9dcf6)"></div>
<div class="abs" style="left:4px;top:286px;width:199px;height:193px;background:#c9ddf6"></div>
<div class="abs" style="left:14.500px;top:318.500px;width:179px;height:151px;background:#f0f1f4"></div>
<svg style="left:7px;top:269px" width="15" height="14" viewBox="0 0 15 14">
  <path d="M1.400 10.800 L10.800 1.400 M4.600 11.600 L13.400 2.800" stroke="#b3121d" stroke-width="1.300"/>
  <path d="M2.400 12.800 L8.600 6.600 L11.400 12.800 Z" fill="none" stroke="#b3121d" stroke-width="1.100"/>
  <path d="M1 12.900 H12.500" stroke="#b3121d" stroke-width="1"/>
</svg>
<div class="t" style="left:22px;top:271.600px;font-size:9.500px;font-weight:bold;color:#111;transform:scaleX(0.8523)">Constraints</div>
<!-- Elements -->
<div class="abs" style="left:4px;top:487px;width:199px;height:20px;background:linear-gradient(90deg,#f6f8fc,#e4edfa 45%,#c9dcf6)"></div>
<div class="abs" style="left:4px;top:506px;width:199px;height:146px;background:#c9ddf6"></div>
<div class="abs" style="left:14.500px;top:539px;width:179px;height:113px;background:#f0f1f4"></div>
<svg style="left:7px;top:489px" width="15" height="15" viewBox="0 0 15 15">
  <path d="M2.400 12.200 L12.200 2.600" stroke="#4a1a1e" stroke-width="1.100"/>
  <circle cx="2.300" cy="12.300" r="1.300" fill="#b3121d"/><circle cx="12.300" cy="2.500" r="1.300" fill="#b3121d"/>
</svg>
<div class="t" style="left:22.400px;top:492px;font-size:9.500px;font-weight:bold;color:#111;transform:scaleX(0.8402)">Elements</div>
<!-- collapse buttons -->
<svg style="left:0;top:200px" width="210" height="310" viewBox="0 200 210 310">
  <defs><g id="colb"><circle r="5.500" fill="#d9e6f8" stroke="#7f8794" stroke-width=".8"/><path d="M-2.600 -.4 L0 -2.800 L2.600 -.4 M-2.600 2.800 L0 .4 L2.600 2.800" fill="none" stroke="#5c6470" stroke-width=".9"/></g></defs>
  <use href="#colb" x="194.500" y="213.300"/><use href="#colb" x="194.500" y="276"/><use href="#colb" x="194.500" y="496.500"/>
</svg>
<!-- filter rows -->
<div class="cb" style="left:16px;top:299.500px"></div>
<div class="btn" style="left:38.500px;top:296.500px;width:94px;height:17px;background:linear-gradient(#fcfcfd,#f1f2f5)"></div>
<div class="abs" style="left:116px;top:297.500px;width:1px;height:15px;background:#c8c8cc"></div>
<div class="t" style="left:67px;top:300.500px;font-size:9px;color:#222;transform:scaleX(0.8653)">Filters</div>
<div class="btn" style="left:137.500px;top:296.500px;width:17.500px;height:17px;background:linear-gradient(#fcfcfd,#f1f2f5)"></div>
<div class="btn" style="left:160.500px;top:296.500px;width:32px;height:17px;background:linear-gradient(#fcfcfd,#f1f2f5)"></div>
<div class="abs" style="left:177px;top:297.500px;width:1px;height:15px;background:#c8c8cc"></div>

<div class="cb" style="left:16px;top:519.500px"></div>
<div class="btn" style="left:38.500px;top:516.500px;width:116.500px;height:17.500px;background:linear-gradient(#fcfcfd,#f1f2f5)"></div>
<div class="abs" style="left:139px;top:517.500px;width:1px;height:15.500px;background:#c8c8cc"></div>
<div class="t" style="left:78.600px;top:520.700px;font-size:9px;color:#222;transform:scaleX(0.8653)">Filters</div>
<div class="btn" style="left:160.500px;top:516.500px;width:32px;height:17.500px;background:linear-gradient(#fcfcfd,#f1f2f5)"></div>
<div class="abs" style="left:177px;top:517.500px;width:1px;height:15.500px;background:#c8c8cc"></div>

<!-- list checkboxes -->
<div class="cb" style="left:16.500px;top:323.500px"></div>
<div class="cb" style="left:16.500px;top:343.800px"></div>
<div class="cb" style="left:16.500px;top:364.200px"></div>
<div class="cb" style="left:16.500px;top:384.800px"></div>
<div class="cb" style="left:16.500px;top:405px"></div>
<div class="cb" style="left:17px;top:543.700px"></div>
<div class="cb" style="left:17px;top:563.800px"></div>
<div class="cb" style="left:17px;top:584.300px"></div>
<div class="cb dis" style="left:17px;top:605.100px"></div>
<div class="cb dis" style="left:17px;top:625.500px"></div>

<div class="t" style="left:56px;top:324.200px;font-size:9.500px;color:#222;transform:scaleX(0.9610)">Constraint1</div>
<div class="t" style="left:56px;top:344.600px;font-size:9.500px;color:#222;transform:scaleX(0.9672)">Constraint2</div>
<div class="t" style="left:56px;top:365px;font-size:9.500px;color:#222;transform:scaleX(0.9672)">Constraint3</div>
<div class="t" style="left:56px;top:385.600px;font-size:9.500px;color:#222;transform:scaleX(0.9672)">Constraint4</div>
<div class="t" style="left:56px;top:405.800px;font-size:9.500px;color:#222;transform:scaleX(0.9672)">Constraint5</div>
<div class="t" style="left:121.200px;top:544.400px;font-size:9.500px;color:#222;transform:scaleX(0.9531)">1-Circle</div>
<div class="t" style="left:121.200px;top:564.500px;font-size:9.500px;color:#222;transform:scaleX(0.9531)">2-Circle</div>
<div class="t" style="left:121.200px;top:585px;font-size:9.500px;color:#222;transform:scaleX(0.9531)">3-Circle</div>
<div class="t" style="left:121.200px;top:605.800px;font-size:9.500px;color:#222;transform:scaleX(0.9424)">4-Line</div>
<div class="t" style="left:121.200px;top:626.200px;font-size:9.500px;color:#222;transform:scaleX(0.9424)">5-Line</div>

<svg style="left:0;top:290px" width="210" height="362" viewBox="0 290 210 362">
<defs>
  <path id="ck" d="M-3 -.2 L-.9 2.400 L3 -3" fill="none" stroke="#111" stroke-width="1.400"/>
  <path id="ckd" d="M-3 -.2 L-.9 2.400 L3 -3" fill="none" stroke="#a9a9ad" stroke-width="1.300"/>
  <path id="dd" d="M-2.800 -1.500 H2.800 L0 1.600 Z" fill="#6f6f73"/>
  <g id="wand">
    <path d="M-4.800 5 L3.600 -4" stroke="#3f3f43" stroke-width="1.500"/>
    <path d="M-4.800 5 L-1.400 1.400" stroke="#2f6fc0" stroke-width="2.200"/>
    <path d="M-3.600 -3.800 L-2.400 -2.600 M3.400 1.400 L4.600 2.600 M-1 -5.400 V-3.800 M4.800 -1.400 H3.400 M2.400 3.600 V5.200 M5.200 -5.400 L4.200 -4.400" stroke="#a9b4c4" stroke-width=".9"/>
  </g>
  <g id="arcI">
    <path d="M8.500 -7.500 Q-6.500 -9 -7.400 6.800" fill="none" stroke="#9a0f1a" stroke-width="2.300" stroke-linecap="round"/>
    <circle cx="-4.200" cy="-3.800" r="2.300" fill="#b3121d"/>
  </g>
  <g id="eqI"><path d="M-5 -1.700 H5 M-5 1.700 H5" stroke="#a3121d" stroke-width="2"/></g>
  <g id="gcirc"><circle r="6.400" fill="#f4f7ef" stroke="#5f9a3a" stroke-width="2.600"/><circle r="7.700" fill="none" stroke="#4b7d2c" stroke-width=".5"/><circle r="1.900" fill="#b3121d"/></g>
  <g id="ycirc"><circle r="7.100" fill="#f2f2f4" stroke="#8b8b8e" stroke-width="1.400"/><circle r="4.900" fill="none" stroke="#8b8b8e" stroke-width="1.400"/><circle r="2.300" fill="#6db33a"/><circle r=".9" fill="#f4fbe9"/></g>
  <g id="dash"><path d="M-4.400 0 H4.400" stroke="#333" stroke-width="1.200"/></g>
  <g id="ln1"><path d="M-6.200 6.400 L6.200 -6.400" stroke="#5f9a3a" stroke-width="2.200"/><circle cx="-6.400" cy="6.600" r="1.900" fill="#b530b5"/><circle cx="6.400" cy="-6.600" r="1.900" fill="#b530b5"/></g>
  <g id="ln2"><path d="M-6.200 6.400 L6.200 -6.400" stroke="#9a62a8" stroke-width="2.200"/><circle cx="-6.400" cy="6.600" r="2" fill="#6db33a"/><circle cx="-6.400" cy="6.600" r=".8" fill="#e9f7d9"/><circle cx="6.400" cy="-6.600" r="1.900" fill="#b530b5"/></g>
  <g id="ln3"><path d="M-6.200 6.400 L6.200 -6.400" stroke="#9a62a8" stroke-width="2.200"/><circle cx="-6.400" cy="6.600" r="1.900" fill="#b530b5"/><circle cx="6.400" cy="-6.600" r="2" fill="#6db33a"/><circle cx="6.400" cy="-6.600" r=".8" fill="#e9f7d9"/></g>
</defs>
<!-- checks -->
<use href="#ck" x="21.500" y="305"/><use href="#ck" x="21.500" y="525"/>
<use href="#ck" x="22" y="329"/><use href="#ck" x="22" y="349.300"/><use href="#ck" x="22" y="369.700"/><use href="#ck" x="22" y="390.300"/><use href="#ck" x="22" y="410.500"/>
<use href="#ck" x="22.500" y="549.200"/><use href="#ck" x="22.500" y="569.300"/><use href="#ck" x="22.500" y="589.800"/>
<use href="#ckd" x="22.500" y="610.600"/><use href="#ckd" x="22.500" y="631"/>
<!-- dropdown arrows -->
<use href="#dd" x="124.300" y="305.200"/><use href="#dd" x="184.600" y="305.200"/><use href="#dd" x="146.800" y="525.400"/><use href="#dd" x="184.600" y="525.400"/>
<!-- eye -->
<path d="M140.200 305 Q146.200 299.400 152.400 305 Q146.200 310.600 140.200 305 Z" fill="#f4f6fa" stroke="#5a6a86" stroke-width=".9"/>
<circle cx="146.300" cy="305" r="2.500" fill="#27457a"/><circle cx="146.300" cy="305" r="1" fill="#0f1f3f"/>
<use href="#wand" x="168.800" y="305"/><use href="#wand" x="168.800" y="525.200"/>
<!-- constraint icons -->
<use href="#arcI" x="41.200" y="328.600"/>
<g transform="translate(41.600,349.200)"><path d="M-7.600 -7.600 L-2.800 -2.800 M7.600 -7.600 L2.800 -2.800 M-7.600 7.600 L-2.800 2.800 M7.600 7.600 L2.800 2.800" stroke="#7c0d16" stroke-width="2"/><circle r="2.600" fill="#b3121d"/></g>
<use href="#arcI" x="41.200" y="369.400"/>
<use href="#eqI" x="41.400" y="390.300"/><use href="#eqI" x="41.400" y="410.500"/>
<!-- element icons -->
<use href="#gcirc" x="42.300" y="549.300"/><use href="#gcirc" x="42.300" y="569.400"/><use href="#gcirc" x="42.300" y="589.900"/>
<use href="#dash" x="64.500" y="549.300"/><use href="#dash" x="86.500" y="549.300"/>
<use href="#dash" x="64.500" y="569.400"/><use href="#dash" x="86.500" y="569.400"/>
<use href="#dash" x="64.500" y="589.900"/><use href="#dash" x="86.500" y="589.900"/>
<use href="#ycirc" x="108.400" y="549.400"/><use href="#ycirc" x="108.400" y="569.500"/><use href="#ycirc" x="108.400" y="590"/>
<use href="#ln1" x="42.600" y="610.200"/><use href="#ln2" x="64.400" y="610.200"/><use href="#ln3" x="86.300" y="610.200"/><use href="#dash" x="108.600" y="610.600"/>
<use href="#ln1" x="42.600" y="630.600"/><use href="#ln2" x="64.400" y="630.600"/><use href="#ln3" x="86.300" y="630.600"/><use href="#dash" x="108.600" y="631"/>
</svg>
<!-- 3D view -->
<div class="abs" style="left:226px;top:128px;width:974px;height:499px;background:#fff"></div>
<svg style="left:226px;top:128px" width="974" height="499" viewBox="226 128 974 499">
  <!-- solid body -->
  <rect x="617.200" y="336.300" width="211.800" height="255.300" fill="#5f6562"/>
  <rect x="808.300" y="421.500" width="392" height="85" fill="#5f6562"/>
  <g fill="none" stroke="#0c0d0c" stroke-width="1.200">
    <path d="M829 421.500 V336.300 H617.200 V591.600 H829 V506.500"/>
    <path d="M1200 421.500 H808.300 V506.500 H1200"/>
    <path d="M680.800 336.300 V591.600 M766.300 336.300 V591.600"/>
    <path d="M842.300 421.500 V506.500 M927 421.500 V506.500 M1139.700 421.500 V506.500"/>
    <circle cx="723.300" cy="367.600" r="23.700" stroke-width="1.600"/>
    <circle cx="723.300" cy="464.200" r="23.700" stroke-width="1.600"/>
    <circle cx="723.300" cy="547.600" r="23.700" stroke-width="1.600"/>
  </g>
  <path d="M1055 420.800 V422.800 M1055 505.400 V507.400" stroke="#0c0d0c" stroke-width="1"/>
  <!-- axes -->
  <path d="M723.200 128 V627" stroke="#a6e2a6" stroke-width="1.700" opacity=".86"/>
  <path d="M226 464.200 H1200" stroke="#c08d9b" stroke-width="1.700" opacity=".78"/>
  <!-- sketch construction -->
  <path d="M680.800 336.300 H766.300 M680.800 591.600 H766.300" stroke="#8a3a9c" stroke-width="1.200" stroke-dasharray="2.500 2" opacity=".75"/>
  <g fill="#c03ad0"><circle cx="680.800" cy="336.300" r="1.500"/><circle cx="766.300" cy="336.300" r="1.500"/><circle cx="680.800" cy="591.600" r="1.500"/><circle cx="766.300" cy="591.600" r="1.500"/></g>
  <circle cx="723.300" cy="367.800" r="1.700" fill="#3458e0"/>
  <circle cx="723.300" cy="464.200" r="1.700" fill="#f02a2a"/>
  <!-- small constraint glyphs -->
  <g fill="none" stroke="#d8242f" stroke-width="1.300">
    <path d="M709.800 363.600 Q704.800 363.800 705.200 369.400"/>
    <path d="M710.400 543.800 Q705.400 544 705.800 549.600"/>
    <path d="M750.600 335.400 H753 M750.600 337.800 H753 M756 334.600 L759 337 L756 339.400" />
    <path d="M745.400 432 H747.600 M749 431.400 L752.600 434.600 M752.600 431.400 L749 434.600 M755 436.200 L757.400 433 L759.800 436.200"/>
    <path d="M750.600 516.600 H753 M750.600 519 H753 M755.800 515.400 Q759.400 517.600 756 520.400"/>
  </g>
  <!-- dimension tool cursor icon -->
  <g stroke="#8e1520" fill="none">
    <path d="M741 577.400 L758.600 566 L761.600 570.600 L744.200 582 Z" stroke-width="2" fill="#77585b"/>
    <path d="M741.600 582.600 L765.600 589.600" stroke-width="2.400"/>
    <path d="M755.400 575.600 Q760.400 581.400 758.600 588" stroke-width="2.200"/>
    <path d="M762.600 572 L765.400 588" stroke-width="1.600" opacity=".7"/>
  </g>
  <!-- cross cursor -->
  <g>
    <path d="M723 536 V562 M710.400 549 H734.400" stroke="#3f4442" stroke-width="2.600" opacity=".85"/>
    <path d="M723 543.500 V554.500 M717.500 549 H728.500" stroke="#aeb3b0" stroke-width="1.200"/>
    <circle cx="723" cy="549" r="1.600" fill="#e4e6e5"/>
  </g>
  <!-- axis cross -->
  <g>
    <path d="M1176.500 601 V589.500" stroke="#c58a9c" stroke-width="1.100"/>
    <path d="M1176.500 585 L1178.700 590.400 H1174.300 Z" fill="#8c1a3a"/>
    <path d="M1175 601.700 H1165" stroke="#c4c6a6" stroke-width="1.100"/>
    <path d="M1160.400 601.700 L1165.800 599.500 V603.900 Z" fill="#2f7f2f"/>
    <path d="M1176.400 599.200 L1179 601.900 L1176.400 604.600 L1173.800 601.900 Z" fill="#1b1b8c"/>
  </g>
  <!-- nav cube -->
  <g>
    <g fill="#f2f2f4" stroke="#a3a3a7" stroke-width=".9" stroke-linejoin="round">
      <path d="M1156.300 130.900 L1148.900 139.400 H1164 Z"/>
      <path d="M1149.200 205.400 H1164 L1156.300 213.600 Z"/>
      <path d="M1114.800 172.100 L1123.400 164.700 V179.500 Z"/>
      <path d="M1197.800 172.100 L1189.600 165 V179.500 Z"/>
      <circle cx="1192.600" cy="136.100" r="3.900"/>
      <path d="M1145.200 134.600 Q1132 138 1127.600 147 L1124.800 145 L1126 152.400 L1134 149.800 L1131.200 148.200 Q1135.200 141.800 1146.200 139.600 Z"/>
      <path d="M1167.400 134.600 Q1180.600 138 1185 147 L1187.800 145 L1186.600 152.400 L1178.600 149.800 L1181.400 148.200 Q1177.400 141.800 1166.400 139.600 Z"/>
    </g>
    <path d="M1142.400 152.300 H1171 L1177 158.300 V186.400 L1171 192.400 H1142.400 L1136.400 186.400 V158.300 Z" fill="#eef1f6" stroke="#5f6268" stroke-width="1"/>
    <path d="M1146.600 157.600 H1167.500 L1171.900 162 V182.800 L1167.500 187.200 H1146.600 L1142.200 182.800 V162 Z" fill="#dfebf9" stroke="#6f737a" stroke-width=".9"/>
    <path d="M1146.800 152.300 V157.600 M1167 152.300 V157.600 M1146.800 187.200 V192.400 M1167 187.200 V192.400 M1136.400 162.200 H1142.200 M1136.400 182.600 H1142.200 M1171.900 162.200 H1177 M1171.900 182.600 H1177" stroke="#6f737a" stroke-width=".8" fill="none"/>
    <path d="M1177.900 162 V194" stroke="#e08a96" stroke-width="1.300"/>
    <path d="M1146.700 194 H1178" stroke="#9ae09a" stroke-width="1.300"/>
    <g fill="#f7f7f8" stroke="#707378" stroke-width=".8" stroke-linejoin="round">
      <path d="M1178.200 198.800 L1184.800 195.600 L1191 198.600 V204.800 L1184.600 207.800 L1178.200 204.800 Z"/>
      <path d="M1178.200 198.800 L1184.600 201.600 L1191 198.600 M1184.600 201.600 V207.800" fill="none"/>
    </g>
  </g>
</svg>
<div class="t" style="left:1156.300px;top:172.100px;font-size:7px;color:#5a5e66;letter-spacing:.4px;transform:translate(-50%,-50%) rotate(-90deg);transform-origin:50% 50%">TOP</div>
<div class="t" style="left:1177.200px;top:578.400px;font-size:6.500px;color:#111">x</div>
<div class="t" style="left:1160px;top:594.400px;font-size:6px;color:#111">Y</div>
<div class="t" style="left:1177.800px;top:594.600px;font-size:6px;color:#111">z</div>
<!-- MDI tabs -->
<div class="abs" style="left:226px;top:627px;width:974px;height:25px;background:#f0f0f2"></div>
<div class="abs" style="left:226.500px;top:627px;width:69px;height:23.500px;background:#e2e2e5;border:1px solid #c9c9cc;border-top:none"></div>
<div class="abs" style="left:295.500px;top:627px;width:100px;height:25px;background:#f6f6f8;border:1px solid #d0d0d3;border-top:none"></div>
<svg style="left:231px;top:632px" width="11" height="13" viewBox="0 0 11 13">
  <path d="M6.500 1 H1 V11.500 H3.200" fill="none" stroke="#d8222c" stroke-width="1.600"/>
  <path d="M3.600 3 H10 L9.300 5.200 H6.300 L6 6.400 H8.600 L8 8.400 H5.600 L4.800 11.600 H2.200 Z" fill="#2a62c8"/>
</svg>
<div class="t" style="left:250px;top:634.500px;font-size:8.500px;color:#6a6a6e;transform:scaleX(0.9302)">Start</div>
<svg style="left:278px;top:634px" width="11" height="11" viewBox="0 0 11 11"><path d="M1.800 1.800 L9.200 9.200 M9.200 1.800 L1.800 9.200" stroke="#555558" stroke-width="1.500"/></svg>
<svg style="left:300px;top:632px" width="10" height="13" viewBox="0 0 10 13">
  <path d="M1 1 H6.400 L9 3.600 V12 H1 Z" fill="#fdfdfd" stroke="#707074" stroke-width=".9"/>
  <path d="M3 7.600 L5.800 4.600 L7.600 6.400 L5 9.600 Z" fill="#2a52a8"/><circle cx="6.200" cy="5.400" r="1.500" fill="#c8202c"/>
  <path d="M2.600 9.400 L4.400 10.600 L2.400 11 Z" fill="#1f2f5f"/>
</svg>
<div class="t" style="left:319.600px;top:634.500px;font-size:8.500px;color:#1c1c1f;transform:scaleX(0.9234)">Lesson_6 : 1*</div>
<svg style="left:378px;top:634px" width="11" height="11" viewBox="0 0 11 11"><path d="M1.800 1.800 L9.200 9.200 M9.200 1.800 L1.800 9.200" stroke="#555558" stroke-width="1.500"/></svg>
<!-- status bar -->
<div class="abs" style="left:0;top:652px;width:1200px;height:23px;background:#f0f0f2"></div>
<div class="t" style="left:0;top:660.200px;font-size:8.500px;color:#222;transform:scaleX(0.9126)">Preselected: Lesson_6.Body.Sketch004.Vertex3 (-19.67 mm, 2.34 nm, 35.01 mm)</div>
<div class="btn" style="left:945px;top:655.500px;width:70.500px;height:21px;background:linear-gradient(#fdfdfe,#f3f3f5);border-color:#c6c6ca"></div>
<div class="abs" style="left:947.500px;top:660.500px;width:10.500px;height:10px;background:linear-gradient(135deg,#4f86c6,#2a5a9c);border:1px solid #2b5085"></div>
<div class="t" style="left:963px;top:661.400px;font-size:8.500px;color:#111">1</div>
<div class="btn" style="left:1021px;top:655.500px;width:69.500px;height:21px;background:linear-gradient(#fdfdfe,#f3f3f5);border-color:#c6c6ca"></div>
<svg style="left:1040px;top:659px" width="8" height="12" viewBox="0 0 8 12"><rect x="1" y="1" width="5.600" height="9.600" rx="2.800" fill="#fff" stroke="#333" stroke-width="1"/><path d="M3.800 2.600 V4.800" stroke="#333" stroke-width="1"/></svg>
<div class="t" style="left:1052px;top:661.400px;font-size:8.500px;color:#111;transform:scaleX(0.8188)">CAD</div>
<div class="btn" style="left:1095.500px;top:655.500px;width:106px;height:21px;background:linear-gradient(#fdfdfe,#f3f3f5);border-color:#c6c6ca"></div>
<div class="t" style="left:1100px;top:661.400px;font-size:8.500px;color:#111;transform:scaleX(0.9369)">229.61 mm x 117.54 mm</div>
<svg style="left:1000px;top:660px" width="200" height="12" viewBox="1000 660 200 12">
  <path d="M1007 665.200 H1012.400 L1009.700 668.200 Z M1082.700 665.200 H1088.100 L1085.400 668.200 Z M1192.300 665.200 H1197.700 L1195 668.200 Z" fill="#333"/>
</svg>
</body>
</html>
